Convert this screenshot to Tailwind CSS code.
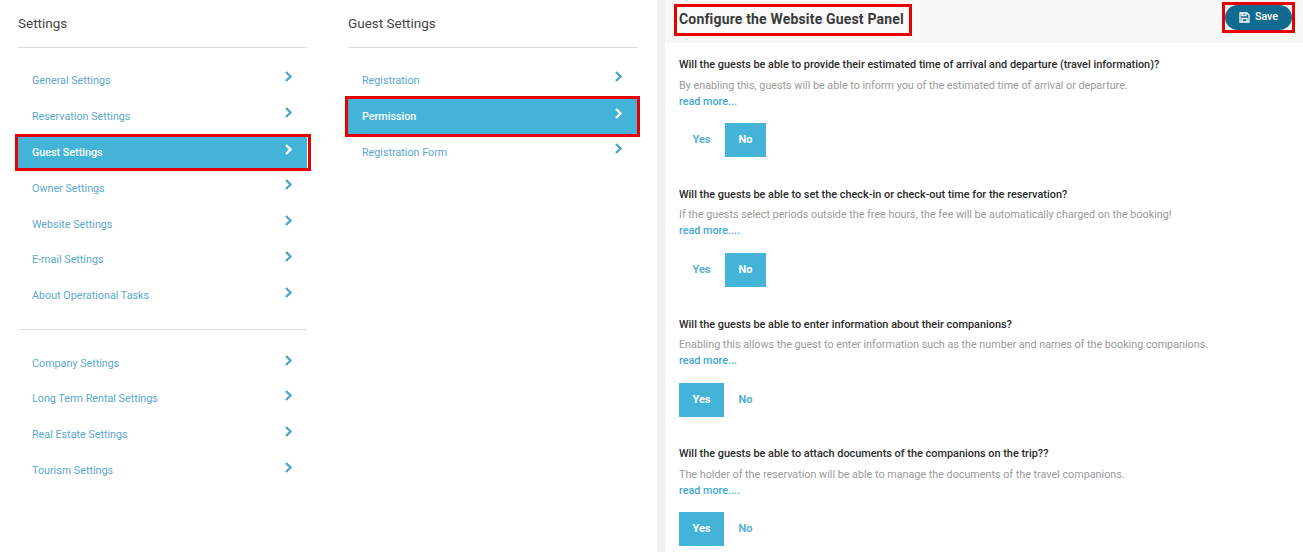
<!DOCTYPE html>
<html lang="en">
<head>
    <meta charset="UTF-8">
    <title>Guest Settings</title>
    <script src="https://cdn.jsdelivr.net/npm/@tailwindcss/browser@4"></script>
</head>
<body class="bg-white font-['Roboto',sans-serif] overflow-hidden">
    <div class="flex h-[552px] w-[1303px] overflow-hidden">
        <!-- settings menu -->
        <div class="w-[330px] pl-[18px] pr-[23px] shrink-0">
            <h2 class="h-[48px] pt-[14px] text-[13.5px] leading-[18px] text-[#444] border-b border-[#ddd]">Settings</h2>
            <ul class="pt-[14px] text-[10.75px] text-[#5aa9cc]">
                <li class="h-[36px] flex items-center justify-between px-[14px]"><span class="pt-[2px]">General Settings</span><svg class="w-[9px] h-[11px] mb-[8px]" viewBox="0 0 9 11" fill="none" stroke="#4fa6cb" stroke-width="2.4"><path d="M2 1l4.5 4.5L2 10"/></svg></li>
                <li class="h-[36px] flex items-center justify-between px-[14px]"><span class="pt-[2px]">Reservation Settings</span><svg class="w-[9px] h-[11px] mb-[8px]" viewBox="0 0 9 11" fill="none" stroke="#4fa6cb" stroke-width="2.4"><path d="M2 1l4.5 4.5L2 10"/></svg></li>
                <li class="h-[31px] mt-[3px] mb-[2px] -mr-px border-r border-white flex items-center justify-between px-[14px] bg-[#43b3d8] text-white font-medium outline-[3px] outline-[#e60000]"><span class="pt-[1px]">Guest Settings</span><svg class="w-[9px] h-[11px] mb-[6px]" viewBox="0 0 9 11" fill="none" stroke="#fff" stroke-width="2.4"><path d="M2 1l4.5 4.5L2 10"/></svg></li>
                <li class="h-[36px] flex items-center justify-between px-[14px]"><span class="pt-[2px]">Owner Settings</span><svg class="w-[9px] h-[11px] mb-[8px]" viewBox="0 0 9 11" fill="none" stroke="#4fa6cb" stroke-width="2.4"><path d="M2 1l4.5 4.5L2 10"/></svg></li>
                <li class="h-[36px] flex items-center justify-between px-[14px]"><span class="pt-[2px]">Website Settings</span><svg class="w-[9px] h-[11px] mb-[8px]" viewBox="0 0 9 11" fill="none" stroke="#4fa6cb" stroke-width="2.4"><path d="M2 1l4.5 4.5L2 10"/></svg></li>
                <li class="h-[36px] flex items-center justify-between px-[14px]"><span>E-mail Settings</span><svg class="w-[9px] h-[11px] mb-[8px]" viewBox="0 0 9 11" fill="none" stroke="#4fa6cb" stroke-width="2.4"><path d="M2 1l4.5 4.5L2 10"/></svg></li>
                <li class="h-[36px] flex items-center justify-between px-[14px]"><span>About Operational Tasks</span><svg class="w-[9px] h-[11px] mb-[8px]" viewBox="0 0 9 11" fill="none" stroke="#4fa6cb" stroke-width="2.4"><path d="M2 1l4.5 4.5L2 10"/></svg></li>
            </ul>
            <div class="mt-[15px] mb-[16px] border-t border-[#ddd]"></div>
            <ul class="text-[10.75px] text-[#5aa9cc]">
                <li class="h-[35px] flex items-center justify-between px-[14px]"><span class="pt-[2px]">Company Settings</span><svg class="w-[9px] h-[11px] mb-[6px]" viewBox="0 0 9 11" fill="none" stroke="#4fa6cb" stroke-width="2.4"><path d="M2 1l4.5 4.5L2 10"/></svg></li>
                <li class="h-[36px] flex items-center justify-between px-[14px]"><span>Long Term Rental Settings</span><svg class="w-[9px] h-[11px] mb-[8px]" viewBox="0 0 9 11" fill="none" stroke="#4fa6cb" stroke-width="2.4"><path d="M2 1l4.5 4.5L2 10"/></svg></li>
                <li class="h-[36px] flex items-center justify-between px-[14px]"><span>Real Estate Settings</span><svg class="w-[9px] h-[11px] mb-[8px]" viewBox="0 0 9 11" fill="none" stroke="#4fa6cb" stroke-width="2.4"><path d="M2 1l4.5 4.5L2 10"/></svg></li>
                <li class="h-[36px] flex items-center justify-between px-[14px]"><span>Tourism Settings</span><svg class="w-[9px] h-[11px] mb-[8px]" viewBox="0 0 9 11" fill="none" stroke="#4fa6cb" stroke-width="2.4"><path d="M2 1l4.5 4.5L2 10"/></svg></li>
            </ul>
        </div>

        <!-- guest settings menu -->
        <div class="w-[327px] pl-[18px] pr-[20px] shrink-0">
            <h2 class="h-[48px] pt-[14px] text-[13.5px] leading-[18px] text-[#444] border-b border-[#ddd]">Guest Settings</h2>
            <ul class="pt-[14px] text-[10.75px] text-[#5aa9cc]">
                <li class="h-[36px] flex items-center justify-between px-[14px]"><span class="pt-[2px]">Registration</span><svg class="w-[9px] h-[11px] mb-[8px]" viewBox="0 0 9 11" fill="none" stroke="#4fa6cb" stroke-width="2.4"><path d="M2 1l4.5 4.5L2 10"/></svg></li>
                <li class="h-[35px] mt-[1px] flex items-center justify-between px-[14px] bg-[#43b3d8] text-white font-medium outline-[3px] outline-[#e60000]"><span class="pt-[2px]">Permission</span><svg class="w-[9px] h-[11px] mb-[7px]" viewBox="0 0 9 11" fill="none" stroke="#fff" stroke-width="2.4"><path d="M2 1l4.5 4.5L2 10"/></svg></li>
                <li class="h-[36px] flex items-center justify-between px-[14px]"><span class="pt-[2px]">Registration Form</span><svg class="w-[9px] h-[11px] mb-[8px]" viewBox="0 0 9 11" fill="none" stroke="#4fa6cb" stroke-width="2.4"><path d="M2 1l4.5 4.5L2 10"/></svg></li>
            </ul>
        </div>

        <div class="w-[8px] bg-[#f0f0f0] shrink-0"></div>

        <!-- guest panel -->
        <div class="flex-1 min-w-0">
            <div class="h-[43px] bg-[#f8f8f8] flex items-start justify-between pl-[14px] pr-[8px]">
                <h1 class="mt-[7px] -ml-[2px] pl-[2px] pr-[5px] pb-[2px] h-[26px] flex items-center text-[14px] font-bold text-[#3a3a3a] bg-[#fbfbfb] outline-[3px] outline-[#e60000] tracking-[0.17px]">Configure the Website Guest Panel</h1>
                <div class="mt-[2px] border-[3px] border-[#e60000]">
                    <button class="w-[67px] h-[25px] rounded-full bg-[#136a90] text-white text-[10.75px] font-medium flex items-center justify-center gap-[5px]">
                        <svg class="w-[11px] h-[11px]" viewBox="0 0 11 11" fill="none" stroke="#fff" stroke-width="1.3"><path d="M1 1h7l2 2v7H1z"/><path d="M3 1v2.5h4V1M3 10V6.5h5V10"/></svg>
                        Save
                    </button>
                </div>
            </div>
            <div class="pl-[14px]">
                <section class="h-[130px] pt-[15px]">
                    <h3 class="text-[10.9px] leading-[14px] font-medium text-[#2a2a2a]">Will the guests be able to provide their estimated time of arrival and departure (travel information)?</h3>
                    <p class="mt-[7px] text-[10.78px] leading-[14px] text-[#9a9a9a]">By enabling this, guests will be able to inform you of the estimated time of arrival or departure.</p>
                    <a class="block mt-[2px] text-[10.8px] leading-[14px] font-medium text-[#43a8cf]">read more...</a>
                    <div class="mt-[14px] flex text-[11px] font-bold">
                        <span class="w-[45px] h-[34px] flex items-center justify-center text-[#55afd3]">Yes</span>
                        <span class="ml-px w-[41px] h-[34px] flex items-center justify-center bg-[#43b3d8] text-white">No</span>
                    </div>
                </section>
                <section class="h-[130px] pt-[15px]">
                    <h3 class="text-[10.9px] leading-[14px] font-medium text-[#2a2a2a]">Will the guests be able to set the check-in or check-out time for the reservation?</h3>
                    <p class="mt-[6px] text-[10.78px] leading-[14px] text-[#9a9a9a]">If the guests select periods outside the free hours, the fee will be automatically charged on the booking!</p>
                    <a class="block mt-[2px] text-[10.8px] leading-[14px] font-medium text-[#43a8cf]">read more....</a>
                    <div class="mt-[15px] flex text-[11px] font-bold">
                        <span class="w-[45px] h-[34px] flex items-center justify-center text-[#55afd3]">Yes</span>
                        <span class="ml-px w-[41px] h-[34px] flex items-center justify-center bg-[#43b3d8] text-white">No</span>
                    </div>
                </section>
                <section class="h-[129px] pt-[15px]">
                    <h3 class="text-[10.9px] leading-[14px] font-medium text-[#2a2a2a]">Will the guests be able to enter information about their companions?</h3>
                    <p class="mt-[6px] text-[10.78px] leading-[14px] text-[#9a9a9a]">Enabling this allows the guest to enter information such as the number and names of the booking companions.</p>
                    <a class="block mt-[2px] text-[10.8px] leading-[14px] font-medium text-[#43a8cf]">read more...</a>
                    <div class="mt-[15px] flex text-[11px] font-bold">
                        <span class="w-[45px] h-[34px] flex items-center justify-center bg-[#43b3d8] text-white">Yes</span>
                        <span class="ml-px w-[41px] h-[34px] flex items-center justify-center text-[#55afd3]">No</span>
                    </div>
                </section>
                <section class="h-[130px] pt-[15px]">
                    <h3 class="text-[10.9px] leading-[14px] font-medium text-[#2a2a2a]">Will the guests be able to attach documents of the companions on the trip??</h3>
                    <p class="mt-[7px] text-[10.78px] leading-[14px] text-[#9a9a9a]">The holder of the reservation will be able to manage the documents of the travel companions.</p>
                    <a class="block mt-[2px] text-[10.8px] leading-[14px] font-medium text-[#43a8cf]">read more....</a>
                    <div class="mt-[14px] flex text-[11px] font-bold">
                        <span class="w-[45px] h-[34px] flex items-center justify-center bg-[#43b3d8] text-white">Yes</span>
                        <span class="ml-px w-[41px] h-[34px] flex items-center justify-center text-[#55afd3]">No</span>
                    </div>
                </section>
            </div>
        </div>
    </div>
</body>
</html>
